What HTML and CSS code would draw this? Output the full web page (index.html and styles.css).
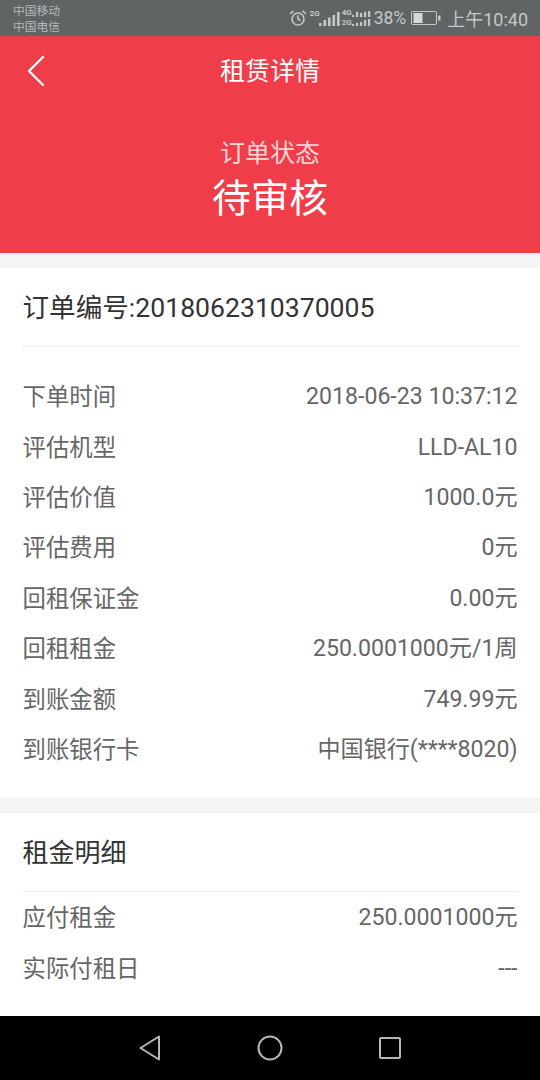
FILE: index.html
```html
<!DOCTYPE html>
<html lang="zh">
<head>
<meta charset="utf-8">
<title>租赁详情</title>
<link rel="stylesheet" href="styles.css">
</head>
<body>
<div class="screen">
  <div class="statusbar">
    <div class="carriers"><span>中国移动</span><span>中国电信</span></div>
    <div class="status-right">
      <svg class="ic-alarm" viewBox="0 0 18 18" width="18" height="18" fill="none" stroke="#c4c8c8" stroke-width="1.600"><circle cx="9" cy="10" r="6"/><path d="M9 6.500V10l2.500 1.500M1 5 4.500 1.800M17 5 13.500 1.800"/></svg>
      <div class="signal-group">
        <span class="net">2G</span>
        <svg viewBox="0 0 21 16" width="21" height="16" fill="#c4c8c8"><rect x="0" y="12" width="2.600" height="3"/><rect x="4.500" y="9" width="2.600" height="6"/><rect x="9" y="6.500" width="2.600" height="8.500"/><rect x="13.500" y="4" width="2.600" height="11"/><rect x="18" y="1" width="2.600" height="14"/></svg>
      </div>
      <div class="signal-group">
        <div class="net-stack"><span class="net">4G</span><span class="net">2G</span></div>
        <svg viewBox="0 0 19 16" width="19" height="16" fill="#c4c8c8"><rect x="0" y="4" width="2.200" height="2"/><rect x="4" y="1" width="2.200" height="5"/><rect x="8" y="2" width="2.200" height="4"/><rect x="12" y="1" width="2.200" height="5"/><rect x="16" y="0" width="2.200" height="6"/><rect x="0" y="13" width="2.200" height="2"/><rect x="4" y="12" width="2.200" height="3"/><rect x="8" y="11" width="2.200" height="4"/><rect x="12" y="9" width="2.200" height="6"/><rect x="16" y="8" width="2.200" height="7"/></svg>
      </div>
      <span class="pct">38%</span>
      <svg class="ic-batt" viewBox="0 0 31 16" width="31" height="16"><rect x="0.500" y="1.500" width="25" height="13" rx="1.500" fill="none" stroke="#c4c8c8"/><rect x="2.500" y="3" width="9" height="10" fill="#d8dada"/><rect x="27" y="5.500" width="2.500" height="5" fill="#c4c8c8"/></svg>
      <span class="time">上午10:40</span>
    </div>
  </div>

  <header class="hero">
    <div class="navbar">
      <svg class="back" viewBox="0 0 18 32" width="18" height="32" fill="none" stroke="#fff" stroke-width="2.400" stroke-linecap="round" stroke-linejoin="round"><path d="M16 2 2 16l14 14"/></svg>
      <h1 class="nav-title">租赁详情</h1>
    </div>
    <div class="state-label">订单状态</div>
    <div class="state-value">待审核</div>
  </header>

  <section class="card first">
    <div class="card-title">订单编号:2018062310370005</div>
    <div class="rows">
      <div class="row"><span>下单时间</span><span>2018-06-23 10:37:12</span></div>
      <div class="row"><span>评估机型</span><span>LLD-AL10</span></div>
      <div class="row"><span>评估价值</span><span>1000.0元</span></div>
      <div class="row"><span>评估费用</span><span>0元</span></div>
      <div class="row"><span>回租保证金</span><span>0.00元</span></div>
      <div class="row"><span>回租租金</span><span>250.0001000元/1周</span></div>
      <div class="row"><span>到账金额</span><span>749.99元</span></div>
      <div class="row"><span>到账银行卡</span><span>中国银行(****8020)</span></div>
    </div>
  </section>

  <section class="card second">
    <div class="card-title small">租金明细</div>
    <div class="rows tight">
      <div class="row"><span>应付租金</span><span>250.0001000元</span></div>
      <div class="row"><span>实际付租日</span><span>---</span></div>
    </div>
  </section>

  <nav class="softkeys">
    <svg viewBox="0 0 24 26" width="24" height="26" fill="none" stroke="#b8b8b8" stroke-width="2" stroke-linejoin="round"><path d="M21 1.500V24.500L2.500 13Z"/></svg>
    <svg viewBox="0 0 26 26" width="26" height="26" fill="none" stroke="#b8b8b8" stroke-width="2"><circle cx="13" cy="13" r="11.500"/></svg>
    <svg viewBox="0 0 24 24" width="24" height="24" fill="none" stroke="#b8b8b8" stroke-width="2" stroke-linejoin="round"><rect x="2" y="2" width="20" height="20" rx="1"/></svg>
  </nav>
</div>
</body>
</html>
```
FILE: styles.css
```css
* { box-sizing: border-box; margin: 0; padding: 0; }
html, body { width: 540px; height: 1080px; overflow: hidden; }
body {
  font-family: Roboto, "Noto Sans CJK SC", sans-serif;
  background: #f4f4f4;
}
.screen { width: 540px; height: 1080px; display: flex; flex-direction: column; }

.statusbar {
  height: 36px;
  background: #5f6565;
  color: #c4c8c8;
  display: flex;
  justify-content: space-between;
  align-items: center;
  padding: 0 12px 0 13px;
}
.carriers { display: flex; flex-direction: column; font-size: 11.750px; line-height: 16px; color: #b4b9b9; padding-top: 2px; }
.status-right { display: flex; align-items: center; height: 36px; }
.ic-alarm { margin-right: 3px; }
.signal-group { display: flex; align-items: flex-end; height: 18px; margin-right: 2px; }
.signal-group svg { display: block; }
.net { width: 9px; font-size: 8px; line-height: 9px; font-weight: 700; display: block; align-self: flex-start; }
.net-stack { display: flex; flex-direction: column; gap: 1px; width: 10px; }
.pct { font-size: 17.500px; margin: 0 5px 0 1px; }
.ic-batt { margin-right: 5px; }
.time { font-size: 18px; }

.hero {
  height: 217px;
  background: #ef3e4a;
  color: #fff;
  display: flex;
  flex-direction: column;
  align-items: center;
}
.navbar {
  width: 100%;
  height: 71px;
  display: flex;
  align-items: center;
  justify-content: center;
  position: relative;
}
.back { position: absolute; left: 27px; top: 19px; }
.nav-title { font-size: 25px; font-weight: 400; line-height: 71px; }
.state-label { font-size: 25px; line-height: 34px; margin-top: 30px; color: #fbd5d8; }
.state-value { font-size: 38.700px; line-height: 56px; }

.card { background: #fff; padding: 0 22.500px; }
.first { margin-top: 15px; height: 530px; }
.second { margin-top: 15px; height: 203px; }

.card-title {
  font-size: 26.600px;
  color: #333;
  height: 79px;
  line-height: 79px;
  border-bottom: 1px solid #eeeeee;
}
.card-title.small { font-size: 26px; line-height: 80px; }
.rows { padding-top: 25.300px; }
.rows.tight { padding-top: 1.300px; }
.row {
  display: flex;
  justify-content: space-between;
  font-size: 23.100px;
  height: 50.400px;
  line-height: 50.400px;
  color: #666;
}
.row span:first-child { font-size: 23.400px; }

.softkeys {
  height: 64px;
  background: #000;
  display: flex;
  align-items: center;
  justify-content: center;
  gap: 95px;
  flex: none;
}
```
